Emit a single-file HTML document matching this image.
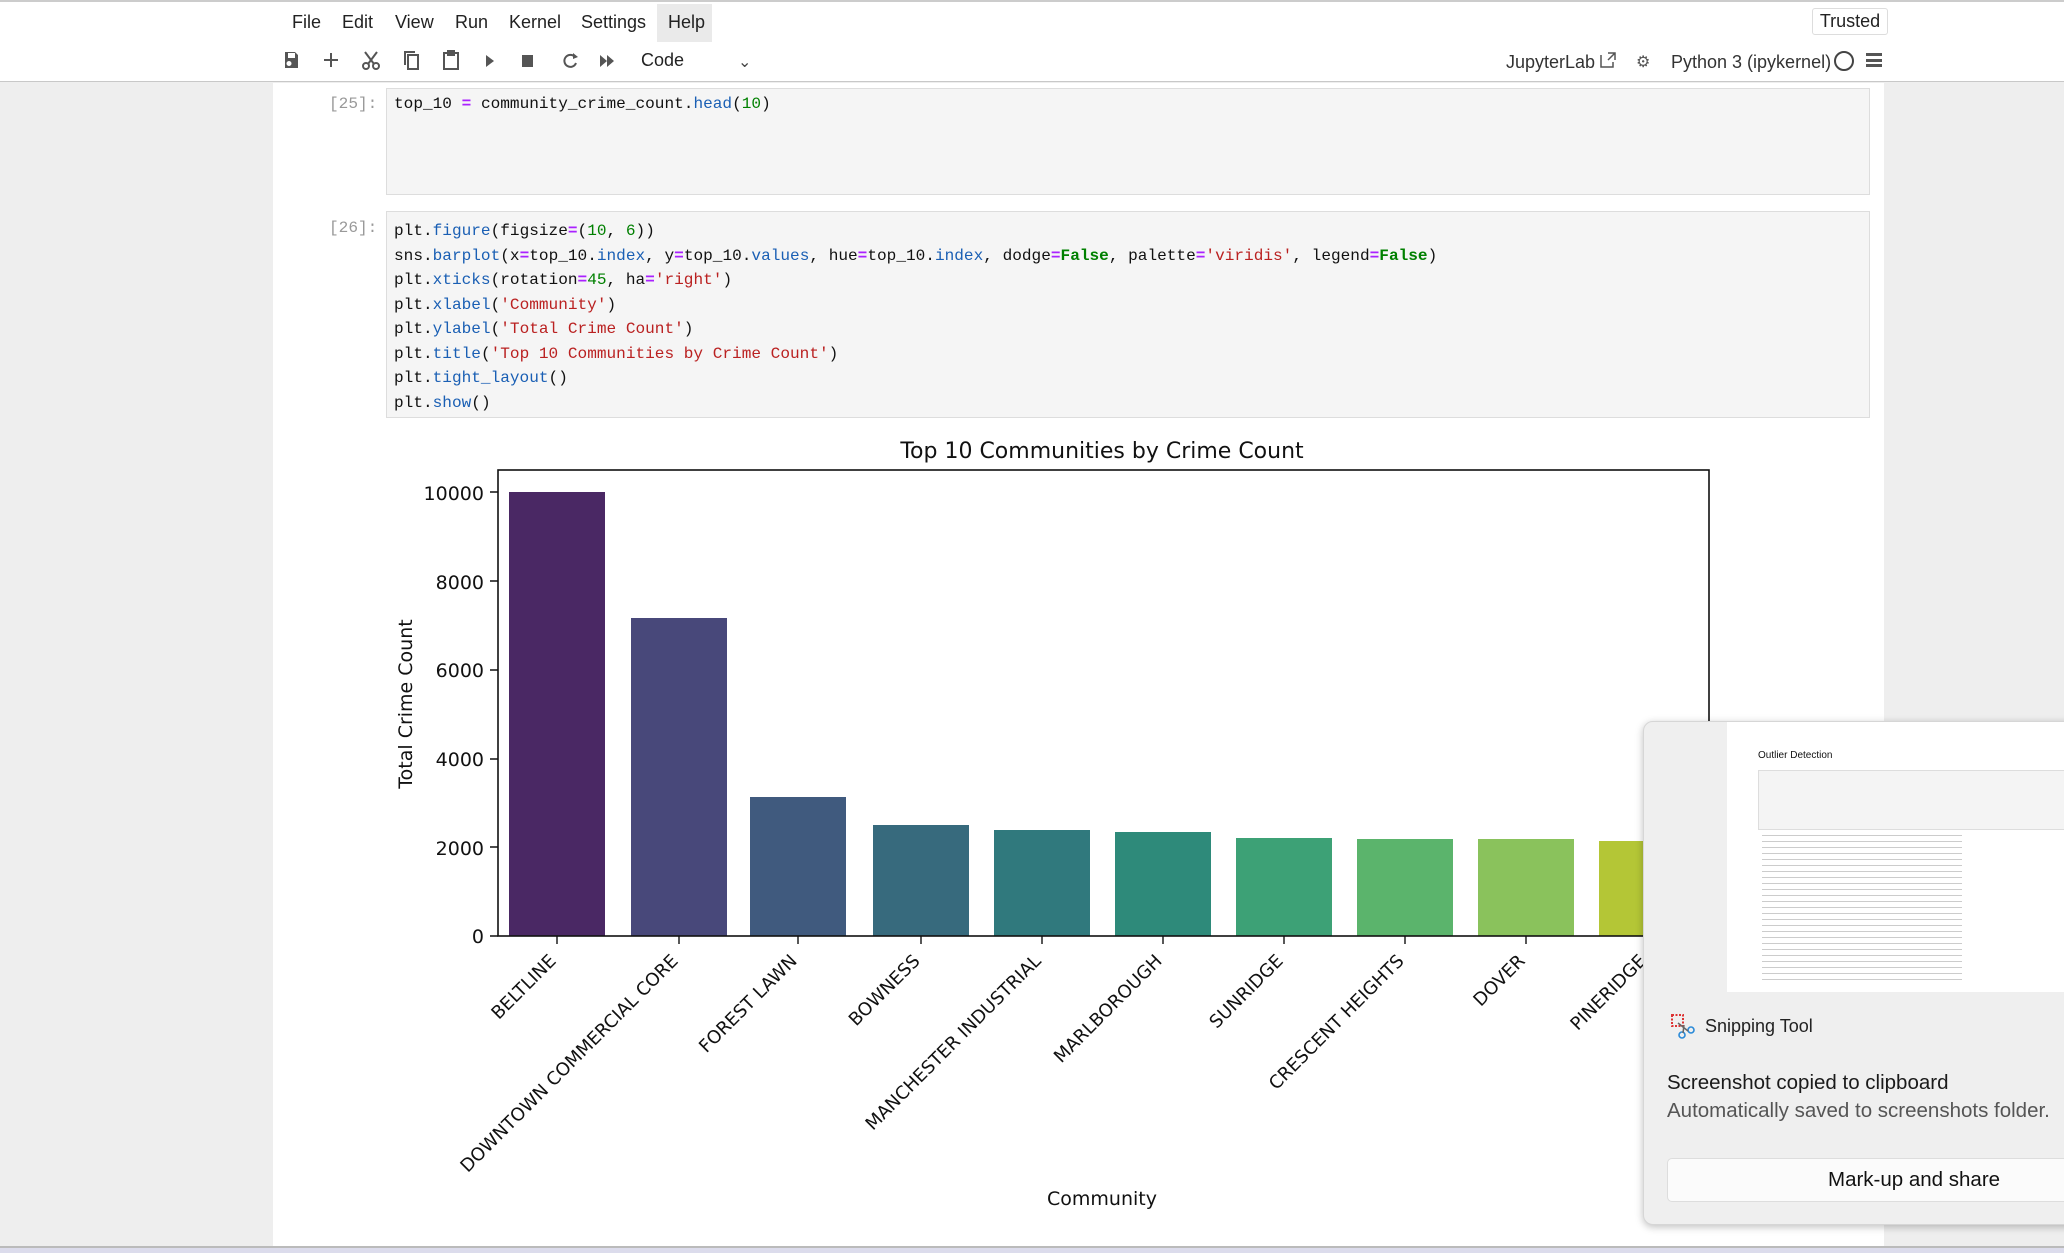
<!DOCTYPE html>
<html><head><meta charset="utf-8"><style>
*{margin:0;padding:0;box-sizing:border-box}
body{width:2064px;height:1253px;overflow:hidden;background:#eee;font-family:"Liberation Sans",sans-serif;position:relative}
.abs{position:absolute}
.menu span{position:absolute;top:12px;font-size:18px;color:#222}
.mono{font-family:"Liberation Mono",monospace;font-size:16.1px;white-space:pre;color:#111}
.k{color:#1a5fb4}.s{color:#ba2121}.n{color:#008000}.o{color:#aa22ff;font-weight:bold}.b{color:#008000;font-weight:bold}
</style></head><body>
<div class="abs" style="left:0;top:0;width:2064px;height:82px;background:#fff;border-top:2px solid #ccc;border-bottom:1px solid #c8c8c8"></div>
<div class="abs" style="left:657px;top:4px;width:55px;height:38px;background:#eaeaea"></div>
<div class="menu">
<span style="left:292px">File</span><span style="left:342px">Edit</span><span style="left:395px">View</span><span style="left:455px">Run</span><span style="left:509px">Kernel</span><span style="left:581px">Settings</span><span style="left:668px">Help</span>
</div>
<svg class="abs" style="left:280px;top:48px" width="340" height="26" viewBox="0 0 340 26" fill="#555">
<path d="M5 4h10l3 3v13H5z M8 5v5h7V5z M9 13a2.5 2.5 0 1 0 0.01 0z" fill-rule="evenodd"/>
<path d="M51 5v14M44 12h14" stroke="#555" stroke-width="2"/>
<g stroke="#555" stroke-width="2" fill="none"><circle cx="86" cy="18" r="3"/><circle cx="96" cy="18" r="3"/><path d="M88 16L97 4M94 16L85 4"/></g>
<g stroke="#555" stroke-width="2" fill="none"><rect x="128" y="7" width="10" height="14"/><path d="M125 17V4h10"/></g>
<g stroke="#555" stroke-width="2" fill="none"><rect x="164" y="5" width="14" height="16"/><rect x="168" y="3" width="6" height="4" fill="#555"/></g>
<path d="M206 7l8 6-8 6z"/>
<rect x="242" y="7" width="11" height="12"/>
<g stroke="#555" stroke-width="2" fill="none"><path d="M295 9a6 6 0 1 0 1 6"/></g><path d="M293 5l5 4-5 2z"/>
<path d="M320 7l7 6-7 6zM327 7l7 6-7 6z"/>
</svg>
<div class="abs" style="left:641px;top:50px;font-size:18px;color:#222">Code</div>
<div class="abs" style="left:738px;top:52px;font-size:16px;color:#444">&#8964;</div>
<div class="abs" style="left:1812px;top:8px;width:76px;height:27px;border:1px solid #ddd;border-radius:3px;font-size:18px;text-align:center;line-height:25px;color:#222">Trusted</div>
<div class="abs" style="left:1506px;top:52px;font-size:18px;color:#333">JupyterLab</div>
<svg class="abs" style="left:1598px;top:50px" width="20" height="20"><path d="M3 5v12h12v-5M10 3h7v7M17 3l-7 7" stroke="#555" stroke-width="1.5" fill="none"/></svg>
<div class="abs" style="left:1636px;top:52px;font-size:16px;color:#555">&#9881;</div>
<div class="abs" style="left:1671px;top:52px;font-size:18px;color:#333">Python 3 (ipykernel)</div>
<div class="abs" style="left:1834px;top:51px;width:20px;height:20px;border:2px solid #444;border-radius:50%"></div>
<div class="abs" style="left:1866px;top:53px;width:16px;height:14px;border-top:3px solid #555;border-bottom:3px solid #555"><div style="margin-top:2.5px;height:3px;background:#555"></div></div>

<div class="abs" style="left:273px;top:83px;width:1611px;height:1164px;background:#fff"></div>
<div class="abs mono" style="left:329px;top:95px;color:#999">[25]:</div>
<div class="abs" style="left:386px;top:88px;width:1484px;height:107px;background:#f5f5f5;border:1px solid #ddd"></div>
<div class="abs mono" style="left:394px;top:95px">top_10 <span class="o">=</span> community_crime_count<span>.</span><span class="k">head</span>(<span class="n">10</span>)</div>
<div class="abs mono" style="left:329px;top:219px;color:#999">[26]:</div>
<div class="abs" style="left:386px;top:211px;width:1484px;height:207px;background:#f5f5f5;border:1px solid #ddd"></div>
<div class="abs mono" style="left:394px;top:219px;line-height:24.5px">plt.<span class="k">figure</span>(figsize<span class="o">=</span>(<span class="n">10</span>, <span class="n">6</span>))
sns.<span class="k">barplot</span>(x<span class="o">=</span>top_10.<span class="k">index</span>, y<span class="o">=</span>top_10.<span class="k">values</span>, hue<span class="o">=</span>top_10.<span class="k">index</span>, dodge<span class="o">=</span><span class="b">False</span>, palette<span class="o">=</span><span class="s">'viridis'</span>, legend<span class="o">=</span><span class="b">False</span>)
plt.<span class="k">xticks</span>(rotation<span class="o">=</span><span class="n">45</span>, ha<span class="o">=</span><span class="s">'right'</span>)
plt.<span class="k">xlabel</span>(<span class="s">'Community'</span>)
plt.<span class="k">ylabel</span>(<span class="s">'Total Crime Count'</span>)
plt.<span class="k">title</span>(<span class="s">'Top 10 Communities by Crime Count'</span>)
plt.<span class="k">tight_layout</span>()
plt.<span class="k">show</span>()</div>

<svg class="abs" style="left:0;top:0" width="2064" height="1253" font-family="DejaVu Sans, Liberation Sans, sans-serif">
<text x="1102" y="458" font-size="22" text-anchor="middle" fill="#111">Top 10 Communities by Crime Count</text>
<g>
<rect x="509" y="492" width="96" height="444" fill="#4a2864"/>
<rect x="631" y="618" width="96" height="318" fill="#48487a"/>
<rect x="750" y="797" width="96" height="139" fill="#405a7e"/>
<rect x="873" y="825" width="96" height="111" fill="#376a7d"/>
<rect x="994" y="830" width="96" height="106" fill="#30797d"/>
<rect x="1115" y="832" width="96" height="104" fill="#2e8a7a"/>
<rect x="1236" y="838" width="96" height="98" fill="#3da176"/>
<rect x="1357" y="839" width="96" height="97" fill="#5bb46c"/>
<rect x="1478" y="839" width="96" height="97" fill="#8ac25c"/>
<rect x="1599" y="841" width="96" height="95" fill="#b4c636"/>
</g>
<rect x="498" y="470" width="1211" height="466" fill="none" stroke="#111" stroke-width="1.6"/>
<g font-size="19" text-anchor="end" fill="#111">
<text x="484" y="943">0</text><text x="484" y="855">2000</text><text x="484" y="766">4000</text><text x="484" y="677">6000</text><text x="484" y="589">8000</text><text x="484" y="500">10000</text>
</g>
<g stroke="#111" stroke-width="1.4">
<path d="M490 936h8M490 847h8M490 759h8M490 670h8M490 581h8M490 492h8"/>
<path d="M557 936v8M679 936v8M798 936v8M921 936v8M1042 936v8M1163 936v8M1284 936v8M1405 936v8M1526 936v8M1647 936v8"/>
</g>
<g font-size="18" text-anchor="end" fill="#111">
<text transform="translate(557,962) rotate(-45)">BELTLINE</text>
<text transform="translate(679,962) rotate(-45)">DOWNTOWN COMMERCIAL CORE</text>
<text transform="translate(798,962) rotate(-45)">FOREST LAWN</text>
<text transform="translate(921,962) rotate(-45)">BOWNESS</text>
<text transform="translate(1042,962) rotate(-45)">MANCHESTER INDUSTRIAL</text>
<text transform="translate(1163,962) rotate(-45)">MARLBOROUGH</text>
<text transform="translate(1284,962) rotate(-45)">SUNRIDGE</text>
<text transform="translate(1405,962) rotate(-45)">CRESCENT HEIGHTS</text>
<text transform="translate(1526,962) rotate(-45)">DOVER</text>
<text transform="translate(1647,962) rotate(-45)">PINERIDGE</text>
</g>
<text x="1102" y="1205" font-size="19" text-anchor="middle" fill="#111">Community</text>
<text transform="translate(412,704) rotate(-90)" font-size="19" text-anchor="middle" fill="#111">Total Crime Count</text>
</svg>

<div class="abs" style="left:0;top:1246px;width:2064px;height:7px;background:#dcdcec;border-top:2px solid #bbb"></div>

<div class="abs" style="left:1643px;top:721px;width:440px;height:504px;background:#efefef;border-radius:10px;border:1px solid #d6d6d6;box-shadow:0 2px 8px rgba(0,0,0,.25);overflow:hidden">
<div class="abs" style="left:83px;top:0;width:360px;height:270px;background:#fff"></div>
<div class="abs" style="left:114px;top:28px;font-size:10px;color:#111">Outlier Detection</div>
<div class="abs" style="left:114px;top:48px;width:330px;height:60px;background:#f4f4f4;border:1px solid #ddd"></div>
<div class="abs" style="left:118px;top:110px;width:200px;height:150px;background:repeating-linear-gradient(#fff 0 3px,#ccc 3px 4px,#fff 4px 6px)"></div>
<svg class="abs" style="left:26px;top:291px" width="26" height="26"><rect x="2" y="2" width="11" height="11" fill="none" stroke="#d33" stroke-width="2" stroke-dasharray="2 1.5"/><circle cx="12" cy="22" r="3" fill="none" stroke="#2a8ad8" stroke-width="1.6"/><circle cx="21" cy="17" r="3" fill="none" stroke="#2a8ad8" stroke-width="1.6"/><path d="M8 10l10 8M14 12l-1 8" stroke="#666" stroke-width="1.5"/></svg>
<div class="abs" style="left:61px;top:294px;font-size:18px;color:#222">Snipping Tool</div>
<div class="abs" style="left:23px;top:349px;font-size:20.5px;color:#1a1a1a">Screenshot copied to clipboard</div>
<div class="abs" style="left:23px;top:377px;font-size:20.5px;color:#555">Automatically saved to screenshots folder.</div>
<div class="abs" style="left:23px;top:436px;width:440px;height:44px;background:#fbfbfb;border:1px solid #ddd;border-radius:5px;font-size:20.5px;color:#111;line-height:42px;padding-left:160px">Mark-up and share</div>
</div>
</body></html>
